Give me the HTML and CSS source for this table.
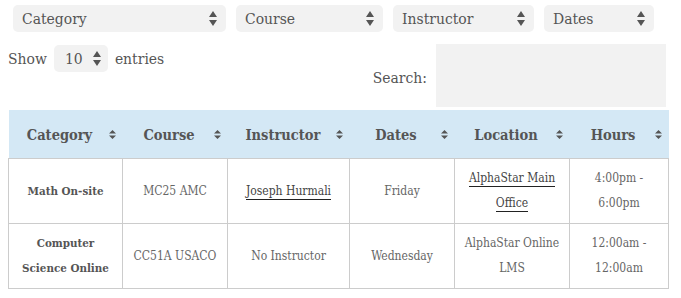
FILE: index.html
```html
<!DOCTYPE html>
<html>
<head>
<meta charset="utf-8">
<link rel="stylesheet" href="styles.css">
</head>
<body>
<div class="filters">
  <div class="sel w1"><span>Category</span><svg class="arr" width="8" height="16" viewBox="0 0 8 16"><path d="M4 0 L8 6 L0 6 Z M0 9 L8 9 L4 15 Z" fill="#555"/></svg></div>
  <div class="sel w2"><span>Course</span><svg class="arr" width="8" height="16" viewBox="0 0 8 16"><path d="M4 0 L8 6 L0 6 Z M0 9 L8 9 L4 15 Z" fill="#555"/></svg></div>
  <div class="sel w3"><span>Instructor</span><svg class="arr" width="8" height="16" viewBox="0 0 8 16"><path d="M4 0 L8 6 L0 6 Z M0 9 L8 9 L4 15 Z" fill="#555"/></svg></div>
  <div class="sel w4"><span>Dates</span><svg class="arr" width="8" height="16" viewBox="0 0 8 16"><path d="M4 0 L8 6 L0 6 Z M0 9 L8 9 L4 15 Z" fill="#555"/></svg></div>
</div>
<div class="controls">
  <div class="show">Show <div class="sel len"><span>10</span><svg class="arr" width="8" height="16" viewBox="0 0 8 16"><path d="M4 0 L8 6 L0 6 Z M0 9 L8 9 L4 15 Z" fill="#555"/></svg></div> entries</div>
  <div class="search"><span class="slabel">Search:</span><div class="box"></div></div>
</div>
<table class="grid">
  <colgroup><col class="c1"><col class="c2"><col class="c3"><col class="c4"><col class="c5"><col class="c6"></colgroup>
  <thead>
    <tr>
      <th><span class="ht">Category</span><svg class="sort" width="7" height="9" viewBox="0 0 7 9"><path d="M3.5 0 L7 3.5 L0 3.5 Z M0 5.5 L7 5.5 L3.5 9 Z" fill="#555"/></svg></th>
      <th><span class="ht">Course</span><svg class="sort" width="7" height="9" viewBox="0 0 7 9"><path d="M3.5 0 L7 3.5 L0 3.5 Z M0 5.5 L7 5.5 L3.5 9 Z" fill="#555"/></svg></th>
      <th><span class="ht">Instructor</span><svg class="sort" width="7" height="9" viewBox="0 0 7 9"><path d="M3.5 0 L7 3.5 L0 3.5 Z M0 5.5 L7 5.5 L3.5 9 Z" fill="#555"/></svg></th>
      <th><span class="ht">Dates</span><svg class="sort" width="7" height="9" viewBox="0 0 7 9"><path d="M3.5 0 L7 3.5 L0 3.5 Z M0 5.5 L7 5.5 L3.5 9 Z" fill="#555"/></svg></th>
      <th><span class="ht">Location</span><svg class="sort" width="7" height="9" viewBox="0 0 7 9"><path d="M3.5 0 L7 3.5 L0 3.5 Z M0 5.5 L7 5.5 L3.5 9 Z" fill="#555"/></svg></th>
      <th><span class="ht">Hours</span><svg class="sort" width="7" height="9" viewBox="0 0 7 9"><path d="M3.5 0 L7 3.5 L0 3.5 Z M0 5.5 L7 5.5 L3.5 9 Z" fill="#555"/></svg></th>
    </tr>
  </thead>
  <tbody>
    <tr>
      <td class="cat">Math On-site</td>
      <td>MC25 AMC</td>
      <td><a href="#">Joseph Hurmali</a></td>
      <td>Friday</td>
      <td><a href="#">AlphaStar Main Office</a></td>
      <td>4:00pm -<br>6:00pm</td>
    </tr>
    <tr>
      <td class="cat">Computer<br>Science Online</td>
      <td>CC51A USACO</td>
      <td>No Instructor</td>
      <td>Wednesday</td>
      <td>AlphaStar Online<br>LMS</td>
      <td>12:00am -<br>12:00am</td>
    </tr>
  </tbody>
</table>
</body>
</html>
```
FILE: styles.css
```css
body {
  margin: 0 8px;
  font-family: "DejaVu Serif", "Liberation Serif", serif;
  font-stretch: condensed;
  color: #555;
  background: #fff;
}
.filters {
  display: flex;
  gap: 10px;
  padding: 5px 0 0 5px;
}
.sel {
  position: relative;
  box-sizing: border-box;
  height: 27px;
  background: #f2f2f2;
  border-radius: 5px;
  font-size: 15.5px;
  line-height: 28px;
  padding-left: 9px;
  color: #555;
}
.sel .arr {
  position: absolute;
  right: 9px;
  top: 6px;
}
.w1 { width: 213px; }
.w2 { width: 147px; }
.w3 { width: 141px; }
.w4 { width: 110px; }
.controls {
  display: flex;
  justify-content: space-between;
  align-items: flex-start;
  margin-top: 12px;
  height: 63px;
  margin-right: 7px;
}
.show {
  display: flex;
  align-items: center;
  gap: 7px;
  font-size: 15.5px;
  margin-top: 1px;
}
.sel.len {
  width: 54px;
  padding-left: 11px;
}
.sel.len .arr { right: 7px; }
.search {
  display: flex;
  align-items: center;
  gap: 9px;
  font-size: 15.5px;
}
.slabel {
  padding-top: 4px;
}
.box {
  width: 230px;
  height: 63px;
  background: #f2f2f2;
}
.grid {
  border-collapse: collapse;
  width: 660px;
  margin-top: 3px;
  table-layout: fixed;
}
.c1 { width: 114px; }
.c2 { width: 105px; }
.c3 { width: 122px; }
.c4 { width: 105px; }
.c5 { width: 115px; }
.c6 { width: 99px; }
.grid th {
  position: relative;
  background: #d4e8f5;
  height: 48px;
  padding: 0 30px 0 18px;
  font-size: 14.5px;
  font-weight: bold;
  color: #555;
  text-align: center;
  white-space: nowrap;
}
.grid th .sort {
  position: absolute;
  right: 7px;
  top: 20px;
}
.grid td {
  border: 1px solid #ccc;
  text-align: center;
  vertical-align: middle;
  font-size: 12px;
  line-height: 25px;
  color: #666;
  padding: 7px 4px;
  height: 51px;
  box-sizing: border-box;
}
.grid tbody tr { height: 65px; }
.grid td.cat {
  font-weight: bold;
  color: #555;
  font-size: 11.5px;
}
.grid a {
  color: #444;
  text-decoration: none;
  border-bottom: 1.5px solid #222;
  padding-bottom: 1px;
}
```
